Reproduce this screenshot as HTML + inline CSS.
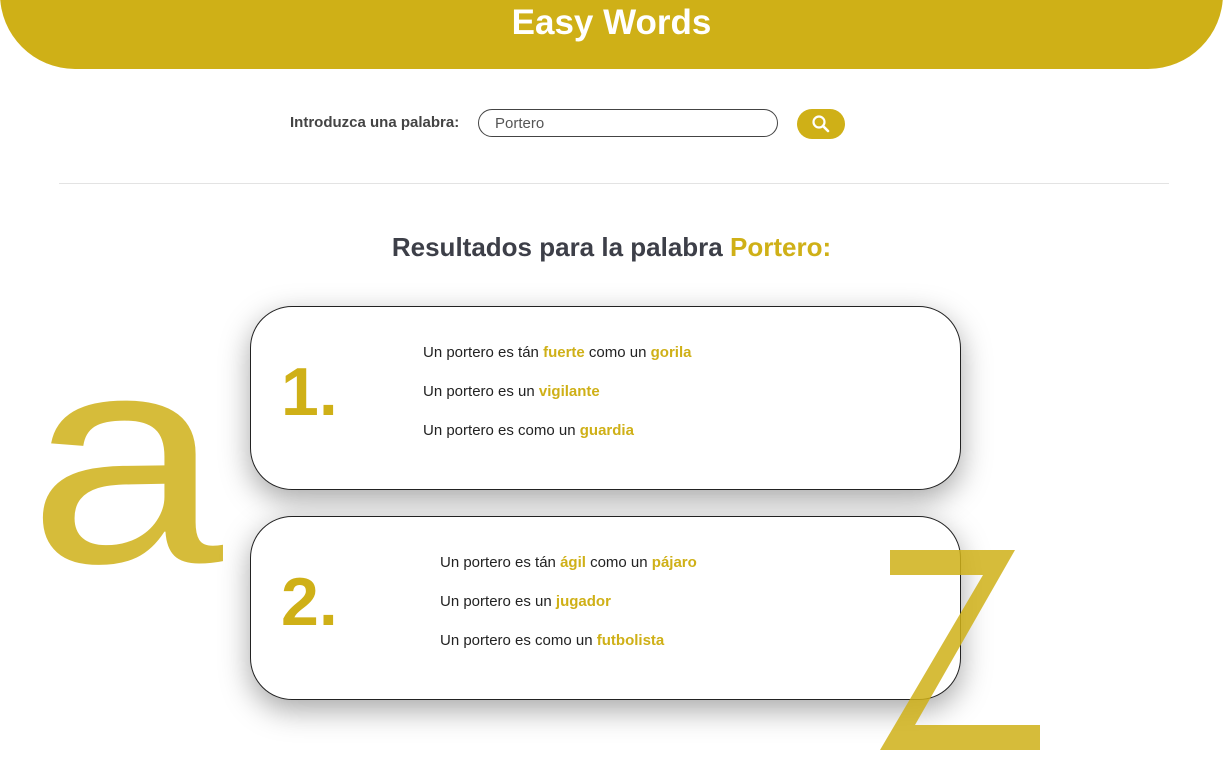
<!DOCTYPE html>
<html><head><meta charset="utf-8"><style>
body{margin:0;width:1223px;height:782px;background:#fff;font-family:"Liberation Sans",sans-serif;position:relative;overflow:hidden}
.hdr{position:absolute;left:0;top:-10px;width:1223px;height:79px;background:#cfb017;border-radius:0 0 75px 75px;}
.hdr h1{margin:0;position:absolute;top:10px;width:100%;text-align:center;color:#fff;font-size:35px;font-weight:bold;line-height:46px}
.lbl{position:absolute;left:290px;top:114px;font-size:15px;color:#444;font-weight:bold}
.inp{position:absolute;left:478px;top:109px;width:300px;height:28px;border:1px solid #444;border-radius:14px;box-sizing:border-box;font-size:15px;color:#555;padding:5px 0 0 16px}
.btn{position:absolute;left:797px;top:109px;width:48px;height:30px;border-radius:15px;background:#cfb017}
hr{position:absolute;left:59px;top:183px;width:1110px;margin:0;border:0;border-top:1px solid #e3e3e3}
.res{position:absolute;top:232px;width:100%;text-align:center;font-size:26px;font-weight:bold;color:#3d3f48}
.y{color:#cfb017}
.card{position:absolute;left:250px;width:711px;height:184px;border:1px solid #222;border-radius:42px;box-sizing:border-box;background:#fff;box-shadow:0 10px 30px rgba(0,0,0,.35)}
.num{position:absolute;left:30px;top:46px;font-size:68px;font-weight:bold;color:#cfb017}
.ln{position:absolute;font-size:15px;color:#222}
.ln b{color:#cfb017}
svg{position:absolute}
</style></head><body>
<div class="hdr"><h1>Easy Words</h1></div>
<div class="lbl">Introduzca una palabra:</div>
<div class="inp">Portero</div>
<div class="btn"><svg width="48" height="30" viewBox="0 0 48 30"><circle cx="22" cy="13" r="5.5" fill="none" stroke="#fff" stroke-width="2.2"/><path d="M26 17l5 5" stroke="#fff" stroke-width="2.6" stroke-linecap="round"/></svg></div>
<hr>
<div class="res">Resultados para la palabra <span class="y">Portero:</span></div>
<svg style="left:20px;top:330px" width="220" height="250"><text x="8" y="232" font-size="300" font-family="Liberation Sans" fill="#cfb017" fill-opacity=".85" textLength="195" lengthAdjust="spacingAndGlyphs">a</text></svg>
<div class="card" style="top:306px"><div class="num">1.</div>
<div class="ln" style="left:172px;top:37px">Un portero es tán <b>fuerte</b> como un <b>gorila</b></div>
<div class="ln" style="left:172px;top:76px">Un portero es un <b>vigilante</b></div>
<div class="ln" style="left:172px;top:115px">Un portero es como un <b>guardia</b></div></div>
<div class="card" style="top:516px"><div class="num">2.</div>
<div class="ln" style="left:189px;top:37px">Un portero es tán <b>ágil</b> como un <b>pájaro</b></div>
<div class="ln" style="left:189px;top:76px">Un portero es un <b>jugador</b></div>
<div class="ln" style="left:189px;top:115px">Un portero es como un <b>futbolista</b></div></div>
<svg style="left:875px;top:545px" width="170" height="215"><path d="M15 5H140L40 180H165V205H5L108 30H15Z" fill="#cfb017" fill-opacity=".85"/></svg>
</body></html>
